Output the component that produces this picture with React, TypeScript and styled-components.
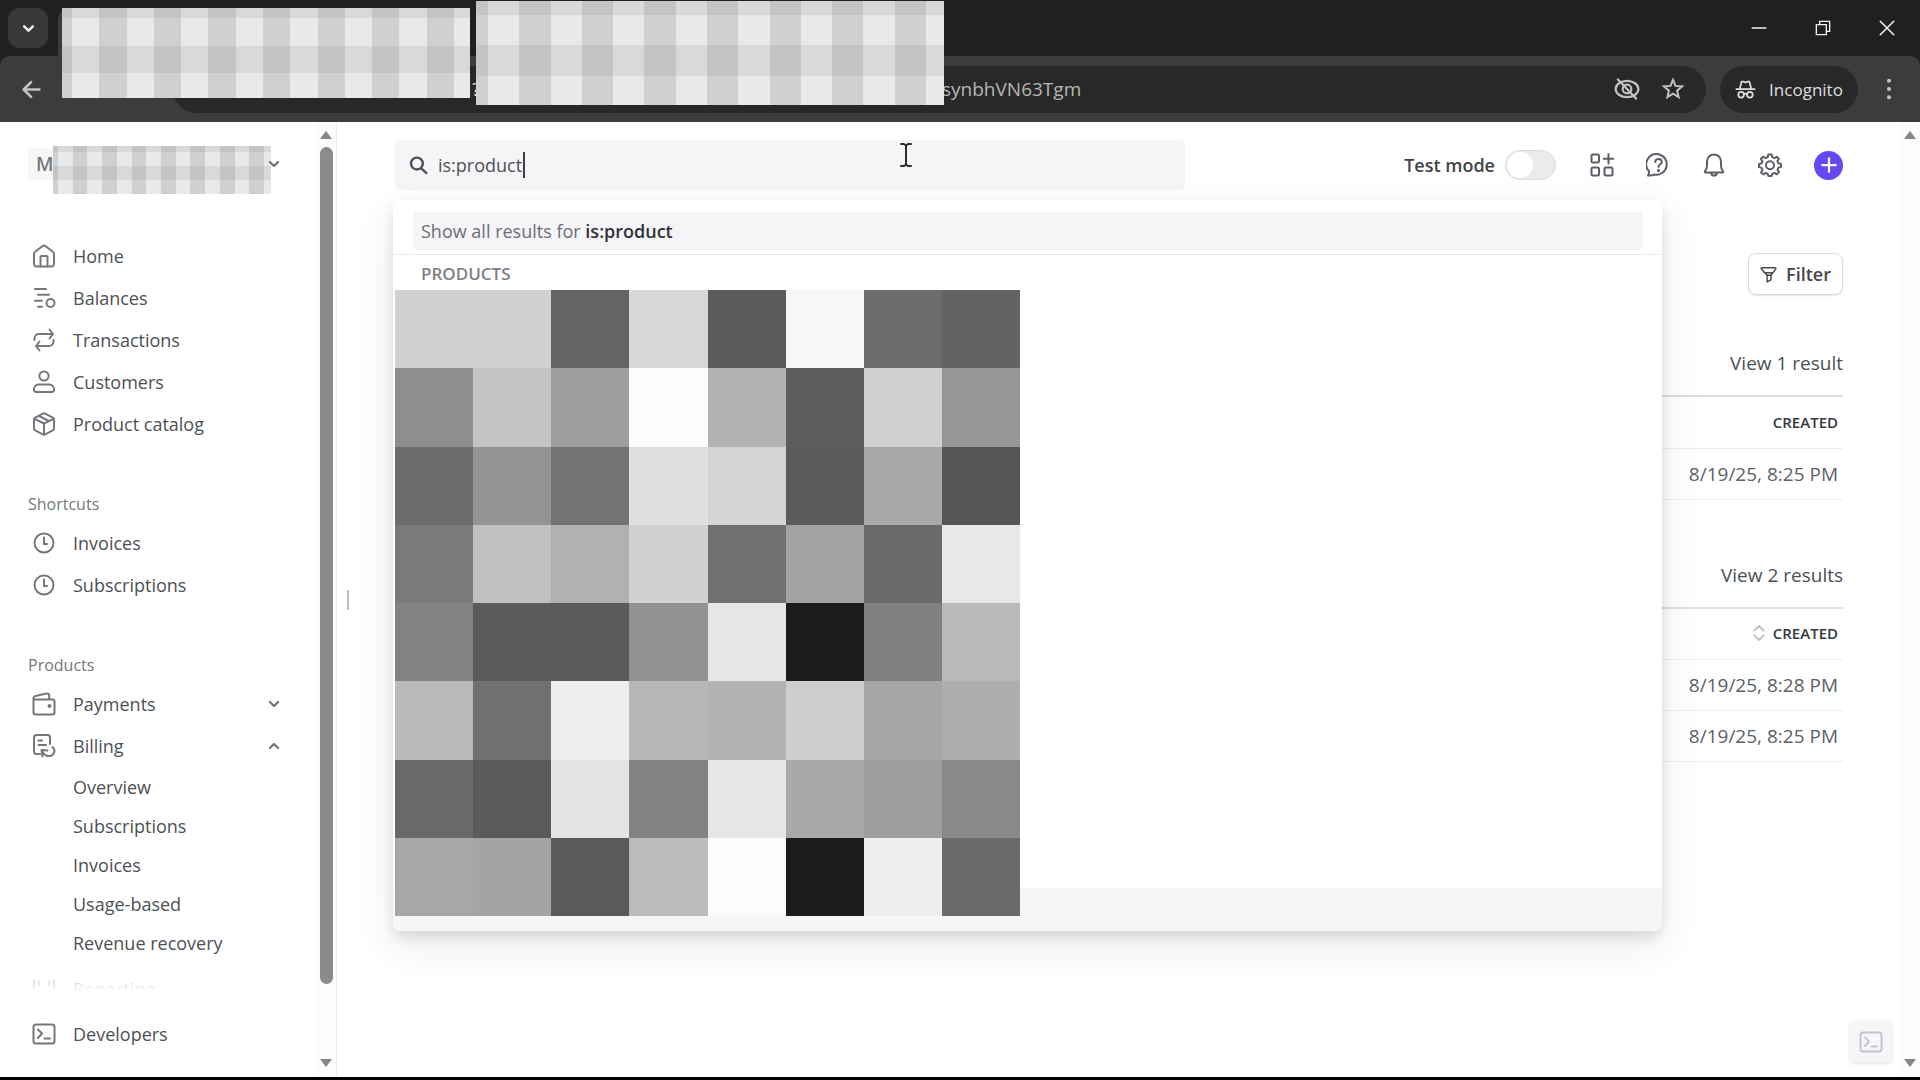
import React, { useState } from "react";
import styled, { createGlobalStyle, css } from "styled-components";

const ink = "#4d5055";
const iconGray = "#74777c";

const GlobalStyle = createGlobalStyle`
  *, *::before, *::after { box-sizing: border-box; }
  body { margin: 0; background: #fff; }
  body, button, input { font-family: "Open Sans", "Noto Sans", sans-serif; }
  button { border: 0; padding: 0; background: none; color: inherit; }
  a { color: inherit; text-decoration: none; }
`;

/* ---------- Icons ---------- */

type IconProps = { size?: number; children: React.ReactNode; weight?: number };

const Svg = styled.svg`
  display: block;
  flex: none;
  fill: none;
  stroke: currentColor;
  stroke-linecap: round;
  stroke-linejoin: round;
`;

const Icon = ({ size = 24, weight = 2, children }: IconProps) => (
  <Svg width={size} height={size} viewBox="0 0 24 24" strokeWidth={weight} aria-hidden="true">
    {children}
  </Svg>
);

const icons = {
  home: (
    <>
      <path d="M2 10.2c0-1 .4-1.800 1.200-2.400L10.300 2.300a2.800 2.800 0 0 1 3.400 0l7.100 5.500c.8.6 1.200 1.400 1.200 2.400V20a2.500 2.500 0 0 1-2.500 2.500h-15A2.500 2.500 0 0 1 2 20z" />
      <path d="M8.500 22.500V13a1 1 0 0 1 1-1h5a1 1 0 0 1 1 1v9.500" />
    </>
  ),
  balances: (
    <>
      <path d="M3 3h11M6 8.800h11M3 14.800h7M6 20.800h4" />
      <circle cx="18.500" cy="17" r="4" />
    </>
  ),
  transactions: (
    <>
      <path d="M17.500 1.500 21 6l-3.500 4.500M20.500 6H7a4.500 4.500 0 0 0-4.500 4.200V12" />
      <path d="M7.500 13.500 4 18l3.500 4.500M4.500 18H17a4.500 4.500 0 0 0 4.500-4.200V12" />
    </>
  ),
  customer: (
    <>
      <circle cx="12" cy="6" r="4.600" />
      <path d="M6.500 14.500h11c2.500 0 4.500 2.300 4.500 5 0 1.700-1 2.500-2.500 2.500h-15C3 22 2 21.200 2 19.500c0-2.700 2-5 4.500-5z" />
    </>
  ),
  box: (
    <>
      <path d="M10.800 1.700a2.500 2.500 0 0 1 2.400 0l7.600 4c.8.4 1.200 1.100 1.200 2v8.600c0 .9-.4 1.600-1.200 2l-7.600 4.100a2.500 2.500 0 0 1-2.400 0l-7.600-4.100a2.200 2.200 0 0 1-1.200-2V7.700c0-.9.4-1.600 1.200-2z" />
      <path d="M2.500 6.800 12 11.500l9.500-4.700M12 11.500V22M7 4l10 5" />
    </>
  ),
  clock: (
    <>
      <circle cx="12" cy="12" r="9.500" />
      <path d="M12 6.500V13h3" />
    </>
  ),
  wallet: (
    <>
      <path d="M1.500 7.500h18.800c1.200 0 2.200 1 2.200 2.200v10.600c0 1.200-1 2.200-2.200 2.200H3.700a2.200 2.200 0 0 1-2.200-2.200V6.500c0-1.400.8-2.300 2-2.600l11-2.400c1.500-.3 2.700.6 2.700 2V7.500" />
      <circle cx="17.500" cy="14" r="1" fill="currentColor" />
    </>
  ),
  billing: (
    <>
      <path d="M8 20H4.500A2.500 2.500 0 0 1 2 17.500v-14C2 2.100 3.100 1 4.500 1h11C16.900 1 18 2.100 18 3.500V10M6.500 6.500H10M6.500 11H14" />
      <path d="M10.500 22.500 9.500 16l6 .5M10 16.500c1.500 4.500 5.500 6.500 9 5.200 4-1.500 4.500-6.200 1.500-8.700" />
    </>
  ),
  reporting: <path d="M2 9V4M7 8V5M17 8V5M22 9V4M2 20V9M22 20V9M12 20v-8" />,
  terminal: (
    <>
      <rect x="1.500" y="2.500" width="21" height="19" rx="2.500" />
      <path d="m6 7.500 4 4L6 16M12.500 16.500H18" />
    </>
  ),
  chevronDown: <path d="m5 8.500 7 7 7-7" />,
  chevronUp: <path d="m5 15.500 7-7 7 7" />,
  back: <path d="M21 12H3.500M11.500 3.500 3 12l8.500 8.500" />,
  minimize: <path d="M3 12h18" />,
  restore: (
    <g strokeLinejoin="miter">
      <path d="M2 7h15v15H2zM7 7V2h15v15h-5" />
    </g>
  ),
  close: <path d="m3 3 18 18M21 3 3 21" />,
  eyeOff: (
    <g strokeLinecap="butt">
      <ellipse cx="12" cy="12" rx="10.500" ry="7.500" />
      <circle cx="12" cy="12" r="4" />
      <path d="M3 2.500 21 21.500" />
    </g>
  ),
  star: (
    <path
      strokeLinejoin="miter"
      d="m12 2.800 2.500 6.100 6.600.5-5 4.300 1.500 6.400L12 16.700l-5.600 3.400 1.500-6.400-5-4.300 6.600-.5z"
    />
  ),
  incognito: (
    <>
      <path d="M1.500 11.500h21M5.500 11 7.500 3h2l2.500 1 2.500-1h2l2 8" />
      <circle cx="7" cy="18" r="3.200" />
      <circle cx="17" cy="18" r="3.200" />
      <path d="M10.200 17.500c1-.8 2.600-.8 3.600 0" />
    </>
  ),
  dots: (
    <g fill="currentColor" stroke="none">
      <circle cx="12" cy="3" r="2.200" />
      <circle cx="12" cy="12" r="2.200" />
      <circle cx="12" cy="21" r="2.200" />
    </g>
  ),
  search: (
    <>
      <circle cx="10" cy="9.500" r="7.500" />
      <path d="m15.500 15.500 6.500 6" />
    </>
  ),
  apps: (
    <>
      <rect x="1.500" y="1.500" width="7.500" height="8" rx="1.500" />
      <rect x="1.500" y="14.500" width="7.500" height="8" rx="1.500" />
      <rect x="14.500" y="14.500" width="8" height="8" rx="1.500" />
      <path d="M18.500 1v9.500M13.700 5.700h9.600" />
    </>
  ),
  help: (
    <>
      <path d="M12.500 1.200A10.300 10.300 0 1 1 8.300 21.500c-1 .8-3.300 1.200-6.300.9 1-1.200 1.300-2.500.9-4.200A10.300 10.300 0 0 1 12.500 1.200z" />
      <path d="M9.200 9c.2-2 1.500-3.100 3.300-3.100s3.300 1.200 3.300 2.900c0 2.400-3.300 2.600-3.300 5.200" />
      <circle cx="12.500" cy="17.600" r=".6" fill="currentColor" />
    </>
  ),
  bell: (
    <>
      <path d="M3 18.200c1.600-1.600 2-3.200 2-5.700V8.700C5 4.400 8 1.500 12 1.500s7 2.900 7 7.200v3.800c0 2.500.4 4.100 2 5.700.5.5.2 1.300-.6 1.300H3.600c-.8 0-1.100-.8-.6-1.300z" />
      <path d="M9 20c.3 1.700 1.400 2.600 3 2.600s2.700-.9 3-2.600" />
    </>
  ),
  gear: (
    <>
      <path d="m10.300 1.500-.6 2.700-2.300 1-2.400-1.500L2.900 6l1.500 2.300-1 2.300-2.400.5v3l2.500.6 1 2.300-1.500 2.300 2.200 2.100L7.500 20l2.300 1 .6 2h3.200l.6-2.100 2.300-1 2.300 1.400 2.200-2.200-1.500-2.300 1-2.200 2.500-.7v-3l-2.600-.6-1-2.200L20.900 6l-2.100-2.200-2.400 1.400-2.200-1-.6-2.700z" />
      <circle cx="12" cy="12.200" r="4" />
    </>
  ),
  plus: <path d="M12 3v18M3 12h18" />,
  filter: (
    <>
      <path d="M2.500 2.500h19c.8 0 1.200.9.800 1.500L15.500 13v6.500l-5.500 3V13L1.700 4c-.4-.6 0-1.500.8-1.500z" />
      <path d="M6 9.500h12M10 13h5.500" />
    </>
  ),
  sort: <path d="m5 8.500 7-7 7 7M5 15.500l7 7 7-7" />,
  beam: <path d="M7 1h3l2 1.500L14 1h3M12 2.500v19M7 23h3l2-1.500 2 1.500h3" />,
};

/* ---------- Browser frame ---------- */

const Screen = styled.div`
  position: relative;
  display: flex;
  flex-direction: column;
  height: 100vh;
  border-bottom: 3px solid #000;
  overflow: hidden;
  color: ${ink};
`;

const TabStrip = styled.div`
  display: flex;
  align-items: flex-start;
  height: 56px;
  padding: 8px 18px 0 8px;
  background: #202020;
`;

const TabSearch = styled.button`
  display: grid;
  place-items: center;
  width: 40px;
  height: 40px;
  border-radius: 12px;
  background: #383838;
  color: #ececec;
`;

const ActiveTab = styled.div`
  width: 300px;
  height: 48px;
  margin-left: 10px;
  border-radius: 12px 12px 0 0;
  background: #3c3c3c;
`;

const WindowControls = styled.div`
  display: flex;
  gap: 34px;
  margin-left: auto;
  color: #f2f2f2;
`;

const WindowButton = styled.button`
  display: grid;
  place-items: center;
  width: 30px;
  height: 40px;
`;

const CornerBack = styled.div`
  background: #202020;
`;

const Toolbar = styled.div`
  display: flex;
  align-items: center;
  height: 66px;
  padding: 0 17px;
  border-radius: 10px 10px 0 0;
  background: #3c3c3c;
  color: #c2c2c2;
`;

const ToolButton = styled.button`
  display: grid;
  place-items: center;
  width: 28px;
  height: 40px;
`;

const AddressBar = styled.div`
  display: flex;
  align-items: center;
  gap: 18px;
  flex: 1;
  height: 47px;
  margin: 0 14px 0 128px;
  padding: 0 19px 0 299px;
  border-radius: 24px;
  background: #282828;
  font-size: 19px;
`;

const Query = styled.span`
  width: 452px;
  color: #d6d6d6;
`;

const Address = styled.input`
  flex: 1;
  min-width: 0;
  padding: 0;
  border: 0;
  outline: 0;
  background: none;
  color: #b5b5b5;
  font-size: 19px;
`;

const IncognitoChip = styled.button`
  display: flex;
  align-items: center;
  justify-content: center;
  gap: 13px;
  width: 138px;
  height: 47px;
  margin-right: 17px;
  border-radius: 24px;
  background: #282828;
  color: #dedede;
  font-size: 17px;
`;

/* ---------- Redaction mosaics ---------- */

const PlaidGrid = styled.div<{ $cols: string; $rows: string }>`
  display: grid;
  flex: none;
  grid-template-columns: ${(p) => p.$cols};
  grid-template-rows: ${(p) => p.$rows};
`;

const PlaidTile = styled.span<{ $col: boolean; $row: boolean }>`
  background: ${(p) => (p.$col ? (p.$row ? "#c4c4c4" : "#d0d0d0") : p.$row ? "#d9d9d9" : "#e9e9e9")};
`;

type PlaidProps = { cols: number[]; rows: number[]; className?: string };

const Plaid = ({ cols, rows, className }: PlaidProps) => (
  <PlaidGrid
    className={className}
    aria-hidden="true"
    $cols={cols.map((c) => `${c}fr`).join(" ")}
    $rows={rows.map((r) => `${r}fr`).join(" ")}
  >
    {rows.flatMap((_, r) =>
      cols.map((_, c) => <PlaidTile key={`${r}-${c}`} $col={c % 2 === 0} $row={r % 2 === 0} />)
    )}
  </PlaidGrid>
);

const TabPlaid = styled(Plaid)`
  position: absolute;
  left: 62px;
  top: 8px;
  width: 408px;
  height: 90px;
`;

const AddressPlaid = styled(Plaid)`
  position: absolute;
  left: 476px;
  top: 1px;
  width: 468px;
  height: 104px;
`;

const AccountPlaid = styled(Plaid)`
  align-self: flex-end;
  width: 218px;
  height: 48px;
`;

const fill = (n: number, size: number) => Array.from({ length: n }, () => size);

/* ---------- Dashboard shell ---------- */

const Body = styled.div`
  display: flex;
  flex: 1;
  min-height: 0;
`;

const Sidebar = styled.aside`
  display: flex;
  flex: none;
  width: 337px;
  border-right: 1px solid #ececee;
`;

const SidebarColumn = styled.div`
  display: flex;
  flex-direction: column;
  flex: 1;
  min-width: 0;
`;

const ScrollArea = styled.div`
  flex: 1;
  min-height: 0;
  padding: 12px 0 0 28px;
  overflow: hidden;
`;

const Account = styled.button`
  display: flex;
  align-items: center;
  height: 60px;
  margin-bottom: 41px;
  color: ${iconGray};

  svg {
    margin-left: -4px;
  }
`;

const AccountInitial = styled.span`
  flex: none;
  width: 25px;
  height: 32px;
  padding-left: 8px;
  border-radius: 4px 0 0 4px;
  background: #f6f6f7;
  font-size: 19px;
  font-weight: 600;
  line-height: 32px;
  text-align: left;
  overflow: hidden;
`;

const NavGroup = styled.nav`
  display: flex;
  flex-direction: column;

  & + & {
    margin-top: 47px;
  }
`;

const GroupLabel = styled.h2`
  margin: 0 0 6px;
  color: #74777c;
  font-size: 16px;
  font-weight: 400;
  line-height: 24px;
`;

const NavLink = styled.a<{ $sub?: boolean }>`
  display: flex;
  align-items: center;
  gap: 17px;
  height: ${(p) => (p.$sub ? "39px" : "42px")};
  padding: 0 35px 0 ${(p) => (p.$sub ? "45px" : "4px")};
  font-size: 18px;
  line-height: 24px;

  svg {
    color: ${iconGray};
  }
`;

const NavText = styled.span`
  flex: 1;
`;

const SubList = styled.div`
  margin-bottom: 6px;
`;

const SidebarFooter = styled.div`
  position: relative;
  flex: none;
  height: 102px;
  margin-top: -40px;
  padding: 38px 0 0 28px;
  background: linear-gradient(rgba(255, 255, 255, 0.6), #fff 16px);
`;

const Scrollbar = styled.div<{ $width: number }>`
  display: flex;
  flex-direction: column;
  align-items: center;
  flex: none;
  width: ${(p) => p.$width}px;
  padding: 9px 0 10px;
  background: #fcfcfc;
`;

const ScrollArrow = styled.span<{ $down?: boolean }>`
  border: 6px solid transparent;
  ${(p) =>
    p.$down
      ? css`
          border-top: 8px solid #858585;
          border-bottom: 0;
        `
      : css`
          border-bottom: 8px solid #858585;
          border-top: 0;
        `}
`;

const ScrollTrack = styled.div`
  flex: 1;
  width: 13px;
  padding: 8px 0 75px;
`;

const ScrollThumb = styled.div`
  height: 100%;
  border-radius: 7px;
  background: #8b8b8b;
`;

const ResizeHandle = styled.div`
  align-self: center;
  width: 2px;
  height: 20px;
  margin: 0 46px 0 10px;
  background: #bcbcbe;
`;

const Main = styled.main`
  flex: 1;
  min-width: 0;
  padding: 18px 57px 0 0;
`;

/* ---------- Top bar ---------- */

const TopBar = styled.header`
  position: relative;
  display: flex;
  align-items: center;
  height: 50px;
`;

const SearchBox = styled.label`
  display: flex;
  align-items: center;
  gap: 10px;
  flex: 0 1 790px;
  height: 50px;
  padding: 0 14px;
  border-radius: 6px;
  background: #f5f5f7;
`;

const SearchField = styled.input`
  flex: 0 1 auto;
  width: 87px;
  padding: 0;
  border: 0;
  outline: 0;
  border-right: 2px solid #3c3f44;
  background: none;
  color: ${ink};
  font-size: 18px;
  line-height: 26px;
`;

const Pointer = styled.span`
  position: absolute;
  left: 499px;
  top: 3px;
  color: #2c2c2c;
`;

const Actions = styled.div`
  display: flex;
  align-items: center;
  gap: 32px;
  margin-left: auto;
  color: #5c5f65;
`;

const TestMode = styled.label`
  display: flex;
  align-items: center;
  gap: 10px;
  margin-right: 2px;
  color: #404348;
  font-size: 18px;
  font-weight: 600;
`;

const Toggle = styled.input`
  appearance: none;
  width: 51px;
  height: 30px;
  margin: 0;
  padding: 1px;
  border: 1px solid #dcdce0;
  border-radius: 15px;
  background: #ebebee;

  &::before {
    content: "";
    display: block;
    width: 26px;
    height: 26px;
    border-radius: 13px;
    background: #fff;
  }
`;

const ActionButton = styled.button`
  display: grid;
  place-items: center;
  width: 24px;
  height: 30px;
`;

const CreateButton = styled.button`
  display: grid;
  place-items: center;
  width: 29px;
  height: 29px;
  border-radius: 15px;
  background: #6547f5;
  color: #fff;
`;

/* ---------- Search results panel ---------- */

const ResultsPanel = styled.section`
  position: absolute;
  z-index: 2;
  left: -2px;
  right: 181px;
  top: 60px;
  display: flex;
  flex-direction: column;
  border-radius: 8px;
  background: #fff;
  box-shadow: 0 6px 12px rgba(0, 0, 0, 0.1), 0 14px 40px rgba(40, 42, 60, 0.1);
  overflow: hidden;
`;

const ShowAll = styled.div`
  padding: 12px 19px 4px 20px;
  border-bottom: 1px solid #ebebed;
`;

const ShowAllLink = styled.a`
  display: block;
  padding: 0 8px;
  border-radius: 4px;
  background: #f5f5f8;
  color: #6b6e75;
  font-size: 18px;
  line-height: 38px;

  b {
    color: #303237;
    font-weight: 600;
  }
`;

const ResultsHeading = styled.h3`
  margin: 0;
  padding: 2px 28px 0;
  color: #7c7f84;
  font-size: 17px;
  font-weight: 600;
  line-height: 33px;
`;

const PixelGrid = styled.div`
  position: relative;
  z-index: 1;
  display: grid;
  grid-template: repeat(8, 1fr) / repeat(8, 1fr);
  width: 625px;
  height: 626px;
  margin-left: 2px;
`;

const Pixel = styled.span<{ $tone: string }>`
  background: #${(p) => p.$tone};
`;

const PanelFooter = styled.footer`
  height: 43px;
  margin-top: -28px;
  background: #f6f6f8;
`;

const tones = [
  "d0d0d0 d0d0d0 646464 d8d8d8 5b5b5b f7f7f7 6d6d6d 636363",
  "8e8e8e c4c4c4 9f9f9f fcfcfc b3b3b3 5d5d5d d0d0d0 969696",
  "6d6d6d 939393 737373 e0e0e0 d5d5d5 5b5b5b a8a8a8 565656",
  "7a7a7a c1c1c1 b1b1b1 d1d1d1 707070 a2a2a2 696969 e8e8e8",
  "828282 5b5b5b 5a5a5a 929292 e6e6e6 1c1c1c 808080 b9b9b9",
  "bababa 707070 eeeeee b7b7b7 b3b3b3 cecece a6a6a6 aeaeae",
  "696969 5a5a5a e4e4e4 838383 e6e6e6 a9a9a9 9e9e9e 898989",
  "a7a7a7 a4a4a4 5a5a5a bbbbbb fcfcfc 1c1c1c eeeeee 6a6a6a",
].flatMap((row) => row.split(" "));

/* ---------- Results page ---------- */

const FilterRow = styled.div`
  display: flex;
  justify-content: flex-end;
  margin-top: 63px;
`;

const FilterButton = styled.button`
  display: flex;
  align-items: center;
  justify-content: center;
  gap: 9px;
  width: 95px;
  height: 42px;
  border: 1px solid #d9d9dd;
  border-radius: 8px;
  background: #fff;
  box-shadow: 0 1px 2px rgba(0, 0, 0, 0.1);
  color: #44474c;
  font-size: 18px;
  font-weight: 600;
`;

const ResultBlock = styled.section<{ $gap: number }>`
  margin-top: ${(p) => p.$gap}px;
`;

const BlockHead = styled.div`
  display: flex;
  justify-content: flex-end;
  padding-bottom: 18px;
  font-size: 19px;
  line-height: 28px;
`;

const Table = styled.table`
  width: 100%;
  border-collapse: collapse;
  border-top: 2px solid #dedee1;
`;

const HeadCell = styled.th`
  height: 52px;
  padding: 0 5px 0 0;
  border-bottom: 1px solid #ededf0;
  color: #36383d;
  font-size: 15px;
  font-weight: 600;
  text-align: right;
`;

const SortLabel = styled.span`
  display: inline-flex;
  align-items: center;
  gap: 6px;

  svg {
    color: #c3c3c7;
  }
`;

const Cell = styled.td`
  height: 51px;
  padding: 0 5px 0 0;
  border-bottom: 1px solid #ededf0;
  color: #5d6065;
  font-size: 19px;
  text-align: right;
`;

const DevTools = styled.button`
  position: absolute;
  right: 29px;
  bottom: 15px;
  display: grid;
  place-items: center;
  width: 41px;
  height: 40px;
  border-radius: 4px;
  background: #f5f6f8;
  box-shadow: 0 1px 4px rgba(0, 0, 0, 0.14);
  color: #c3c5ca;
`;

/* ---------- Composition ---------- */

const mainLinks = [
  { label: "Home", icon: icons.home },
  { label: "Balances", icon: icons.balances },
  { label: "Transactions", icon: icons.transactions },
  { label: "Customers", icon: icons.customer },
  { label: "Product catalog", icon: icons.box },
];

const billingLinks = ["Overview", "Subscriptions", "Invoices", "Usage-based", "Revenue recovery"];

type ItemProps = { label: string; icon?: React.ReactNode; toggle?: React.ReactNode };

const NavItem = ({ label, icon, toggle }: ItemProps) => (
  <NavLink href="#" $sub={!icon}>
    {icon && <Icon>{icon}</Icon>}
    <NavText>{label}</NavText>
    {toggle && (
      <Icon size={14} weight={4}>
        {toggle}
      </Icon>
    )}
  </NavLink>
);

type BlockProps = { link: string; dates: string[]; gap: number; sortable?: boolean };

const Results = ({ link, dates, gap, sortable }: BlockProps) => (
  <ResultBlock $gap={gap}>
    <BlockHead>
      <a href="#">{link}</a>
    </BlockHead>
    <Table>
      <thead>
        <tr>
          <HeadCell scope="col">
            <SortLabel>
              {sortable && (
                <Icon size={16} weight={3}>
                  {icons.sort}
                </Icon>
              )}
              CREATED
            </SortLabel>
          </HeadCell>
        </tr>
      </thead>
      <tbody>
        {dates.map((date) => (
          <tr key={date}>
            <Cell>{date}</Cell>
          </tr>
        ))}
      </tbody>
    </Table>
  </ResultBlock>
);

export default function App() {
  const [term, setTerm] = useState("is:product");
  const [url, setUrl] = useState("synbhVN63Tgm");

  return (
    <>
      <GlobalStyle />
      <Screen>
        <TabStrip>
          <TabSearch aria-label="Search tabs">
            <Icon size={15} weight={4}>{icons.chevronDown}</Icon>
          </TabSearch>
          <ActiveTab />
          <WindowControls>
            <WindowButton aria-label="Minimize">
              <Icon size={18} weight={2}>{icons.minimize}</Icon>
            </WindowButton>
            <WindowButton aria-label="Restore">
              <Icon size={16} weight={2}>{icons.restore}</Icon>
            </WindowButton>
            <WindowButton aria-label="Close">
              <Icon size={18} weight={2}>{icons.close}</Icon>
            </WindowButton>
          </WindowControls>
        </TabStrip>
        <CornerBack>
          <Toolbar>
            <ToolButton aria-label="Back">
              <Icon size={21} weight={3}>{icons.back}</Icon>
            </ToolButton>
            <AddressBar>
              <Query>?</Query>
              <Address aria-label="Address" value={url} onChange={(e) => setUrl(e.target.value)} />
              <ToolButton aria-label="Third-party cookies blocked">
                <Icon size={26} weight={2}>{icons.eyeOff}</Icon>
              </ToolButton>
              <ToolButton aria-label="Bookmark this tab">
                <Icon size={24} weight={2}>{icons.star}</Icon>
              </ToolButton>
            </AddressBar>
            <IncognitoChip>
              <Icon size={21} weight={2}>{icons.incognito}</Icon>
              Incognito
            </IncognitoChip>
            <ToolButton aria-label="Menu">
              <Icon size={22}>{icons.dots}</Icon>
            </ToolButton>
          </Toolbar>
        </CornerBack>

        <Body>
          <Sidebar>
            <SidebarColumn>
              <ScrollArea>
                <Account>
                  <AccountInitial>M</AccountInitial>
                  <AccountPlaid
                    cols={[5, ...fill(14, 15), 7]}
                    rows={[6, 14, 14, 14]}
                  />
                  <Icon size={14} weight={4}>{icons.chevronDown}</Icon>
                </Account>
                <NavGroup aria-label="Main">
                  {mainLinks.map((item) => (
                    <NavItem key={item.label} {...item} />
                  ))}
                </NavGroup>
                <NavGroup aria-label="Shortcuts">
                  <GroupLabel>Shortcuts</GroupLabel>
                  <NavItem label="Invoices" icon={icons.clock} />
                  <NavItem label="Subscriptions" icon={icons.clock} />
                </NavGroup>
                <NavGroup aria-label="Products">
                  <GroupLabel>Products</GroupLabel>
                  <NavItem label="Payments" icon={icons.wallet} toggle={icons.chevronDown} />
                  <NavItem label="Billing" icon={icons.billing} toggle={icons.chevronUp} />
                  <SubList>
                    {billingLinks.map((label) => (
                      <NavItem key={label} label={label} />
                    ))}
                  </SubList>
                  <NavItem label="Reporting" icon={icons.reporting} />
                </NavGroup>
              </ScrollArea>
              <SidebarFooter>
                <NavItem label="Developers" icon={icons.terminal} />
              </SidebarFooter>
            </SidebarColumn>
            <Scrollbar $width={20} aria-hidden="true">
              <ScrollArrow />
              <ScrollTrack>
                <ScrollThumb />
              </ScrollTrack>
              <ScrollArrow $down />
            </Scrollbar>
          </Sidebar>
          <ResizeHandle />

          <Main>
            <TopBar>
              <SearchBox>
                <Icon size={19} weight={3}>{icons.search}</Icon>
                <SearchField aria-label="Search" value={term} onChange={(e) => setTerm(e.target.value)} />
              </SearchBox>
              <Pointer>
                <Icon size={24} weight={2}>{icons.beam}</Icon>
              </Pointer>
              <Actions>
                <TestMode>
                  Test mode
                  <Toggle type="checkbox" role="switch" />
                </TestMode>
                <ActionButton aria-label="Apps"><Icon>{icons.apps}</Icon></ActionButton>
                <ActionButton aria-label="Help"><Icon>{icons.help}</Icon></ActionButton>
                <ActionButton aria-label="Notifications"><Icon>{icons.bell}</Icon></ActionButton>
                <ActionButton aria-label="Settings"><Icon>{icons.gear}</Icon></ActionButton>
                <CreateButton aria-label="Create">
                  <Icon size={18} weight={3}>{icons.plus}</Icon>
                </CreateButton>
              </Actions>
              <ResultsPanel>
                <ShowAll>
                  <ShowAllLink href="#">
                    Show all results for <b>is:product</b>
                  </ShowAllLink>
                </ShowAll>
                <ResultsHeading>PRODUCTS</ResultsHeading>
                <PixelGrid aria-hidden="true">
                  {tones.map((tone, i) => (
                    <Pixel key={i} $tone={tone} />
                  ))}
                </PixelGrid>
                <PanelFooter />
              </ResultsPanel>
            </TopBar>

            <FilterRow>
              <FilterButton>
                <Icon size={17} weight={2}>{icons.filter}</Icon>
                Filter
              </FilterButton>
            </FilterRow>
            <Results link="View 1 result" dates={["8/19/25, 8:25 PM"]} gap={54} />
            <Results
              link="View 2 results"
              dates={["8/19/25, 8:28 PM", "8/19/25, 8:25 PM"]}
              gap={61}
              sortable
            />
          </Main>
          <Scrollbar $width={20} aria-hidden="true">
            <ScrollArrow />
            <ScrollTrack />
            <ScrollArrow $down />
          </Scrollbar>
        </Body>

        <TabPlaid cols={[10, ...fill(14, 27), 16]} rows={[10, 28, 27, 25]} />
        <AddressPlaid cols={[12, ...fill(14, 31), 18]} rows={[14, 30, 31, 29]} />
        <DevTools aria-label="Open developer tools">
          <Icon size={24} weight={2}>{icons.terminal}</Icon>
        </DevTools>
      </Screen>
    </>
  );
}
